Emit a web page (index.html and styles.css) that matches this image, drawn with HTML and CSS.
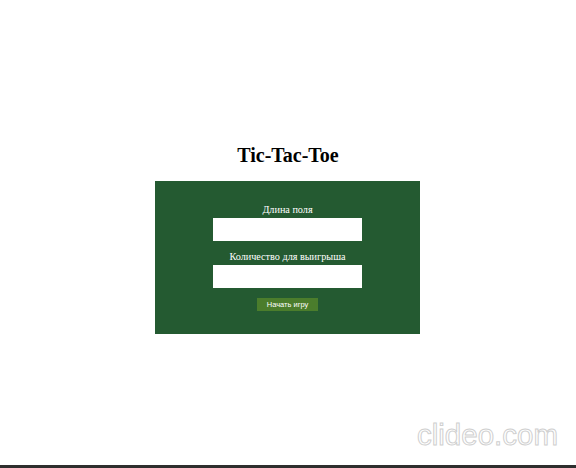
FILE: index.html
```html
<!DOCTYPE html>
<html lang="ru">
<head>
<meta charset="utf-8">
<title>Tic-Tac-Toe</title>
<link rel="stylesheet" href="styles.css">
</head>
<body>
<main class="page">
  <h1 class="title">Tic-Tac-Toe</h1>
  <form class="panel">
    <label class="label" for="size">Длина поля</label>
    <input class="field" id="size" type="text">
    <label class="label label-second" for="win">Количество для выигрыша</label>
    <input class="field" id="win" type="text">
    <button class="start" type="button">Начать игру</button>
  </form>
</main>
<div class="bar"></div>
<div class="watermark">clideo.com</div>
</body>
</html>
```
FILE: styles.css
```css
html, body {
  margin: 0;
  padding: 0;
  height: 100%;
}
body {
  background: #ffffff;
  font-family: "Liberation Serif", "Times New Roman", serif;
  display: flex;
  flex-direction: column;
  position: relative;
  overflow: hidden;
}
.page {
  flex: 1;
  display: flex;
  flex-direction: column;
  align-items: center;
  padding-top: 145px;
}
.title {
  margin: 0 0 15px 0;
  font-size: 20px;
  line-height: 21px;
  font-weight: bold;
  color: #000;
}
.panel {
  width: 265px;
  height: 153px;
  box-sizing: border-box;
  background: #245a31;
  padding-top: 23px;
  display: flex;
  flex-direction: column;
  align-items: center;
  margin-right: 1px;
}
.label {
  color: #ffffff;
  font-size: 10.2px;
  line-height: 11px;
  height: 11px;
  margin-bottom: 3px;
}
.label-second {
  margin-top: 10px;
}
.field {
  width: 149px;
  height: 23px;
  box-sizing: border-box;
  border: none;
  background: #ffffff;
  padding: 0;
  margin: 0;
}
.start {
  margin-top: 10px;
  width: 61px;
  height: 13px;
  padding: 0;
  border: none;
  background: #4b7d2c;
  color: #ffffff;
  font-family: "Liberation Sans", Arial, sans-serif;
  font-size: 7.5px;
  line-height: 13px;
}
.bar {
  height: 3px;
  background: #2e2e2e;
  flex: none;
}
.watermark {
  position: absolute;
  left: 417px;
  top: 418px;
  font-family: "Liberation Sans", Arial, sans-serif;
  font-size: 29.5px;
  line-height: 34px;
  color: #ffffff;
  -webkit-text-stroke: 1px #cfcfcf;
}
```
